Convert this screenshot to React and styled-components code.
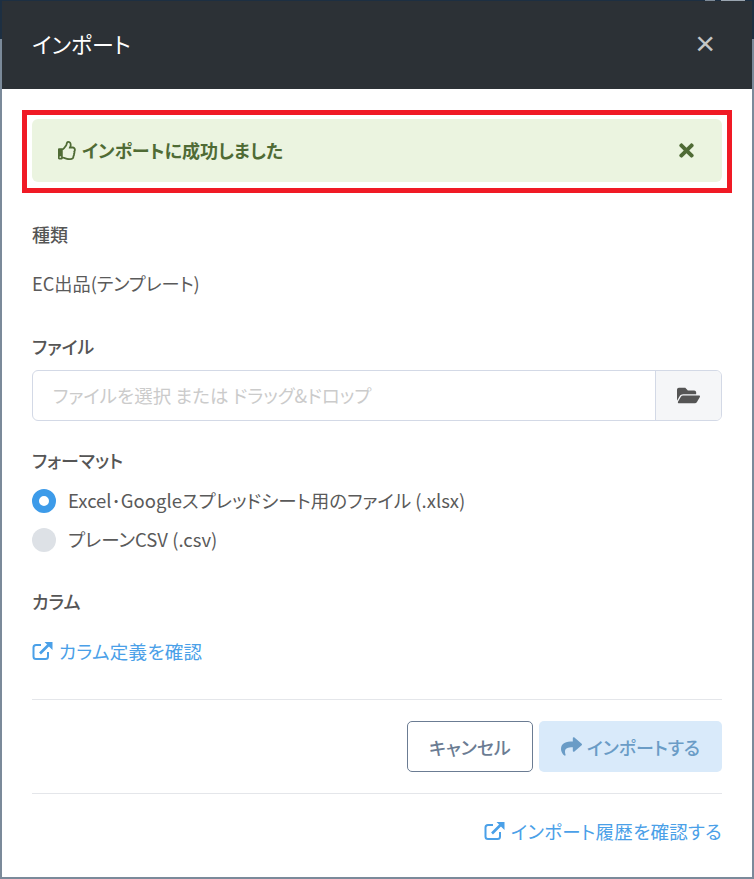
import React from 'react'
import styled, { createGlobalStyle } from 'styled-components'
import { FaRegThumbsUp, FaTimes, FaFolderOpen, FaShare } from 'react-icons/fa'

const GlobalStyle = createGlobalStyle`
  html, body { margin: 0; padding: 0; }
  body {
    font-family: "Noto Sans CJK JP", "Noto Sans", sans-serif;
    font-feature-settings: "palt";
  }
`

const LinkIcon = () => (
  <svg width="21" height="20" viewBox="0 0 21 20" fill="none">
    <path d="M9 4H4a2.500 2.500 0 0 0-2.500 2.500v9A2.500 2.500 0 0 0 4 18h9.500a2.500 2.500 0 0 0 2.500-2.500V11" stroke="currentColor" strokeWidth="2" />
    <path d="M8 12.500L16.500 4" stroke="currentColor" strokeWidth="2.600" />
    <path d="M12.500 1h8v8l-2.800-2.800-2.400-2.400z" fill="currentColor" />
  </svg>
)

const App = () => (
  <>
    <GlobalStyle />
    <Backdrop>
      <TopEdge />
      <Modal>
        <Header>
          <Title>インポート</Title>
          <CloseButton aria-label="閉じる">×</CloseButton>
        </Header>
        <Body>
          <Alert>
            <AlertText><FaRegThumbsUp size={19} />インポートに成功しました</AlertText>
            <AlertClose><FaTimes size={21} /></AlertClose>
          </Alert>
          <Highlight />

          <Label $top={41}>種類</Label>
          <Value>EC出品(テンプレート)</Value>

          <Label $top={39}>ファイル</Label>
          <FileInput>
            <Placeholder>ファイルを選択 または ドラッグ&ドロップ</Placeholder>
            <FileButton><FaFolderOpen size={23} /></FileButton>
          </FileInput>

          <Label $top={28}>フォーマット</Label>
          <RadioList>
            <RadioRow><Radio $checked /><span>Excel･Googleスプレッドシート用のファイル (.xlsx)</span></RadioRow>
            <RadioRow><Radio /><span>プレーンCSV (.csv)</span></RadioRow>
          </RadioList>

          <Label $top={36}>カラム</Label>
          <ColumnLink><LinkIcon /><span>カラム定義を確認</span></ColumnLink>

          <Divider $top={36} />
          <Actions>
            <CancelButton>キャンセル</CancelButton>
            <ImportButton><FaShare size={21} />インポートする</ImportButton>
          </Actions>
          <Divider $top={21} />
          <Footer>
            <ColumnLink as="span" $flat><LinkIcon /><span>インポート履歴を確認する</span></ColumnLink>
          </Footer>
        </Body>
      </Modal>
    </Backdrop>
  </>
)

export default App

const Backdrop = styled.div`
  position: relative;
  box-sizing: border-box;
  width: 754px;
  height: 879px;
  padding: 1px 2px 2px;
  overflow: hidden;
  background: linear-gradient(#1d2f42 0, #1d2f42 39px, #7b8a9a 39px, #7b8a9a 100%);
`
const TopEdge = styled.div`
  position: absolute;
  top: 0;
  right: 9px;
  width: 40px;
  height: 1px;
  background: linear-gradient(90deg, #7d8b99 0 25%, transparent 25% 40%, #9aa5b0 40% 100%);
`
const Modal = styled.div`
  height: 100%;
  background: #fff;
  display: flex;
  flex-direction: column;
`
const Header = styled.div`
  box-sizing: border-box;
  height: 88px;
  flex: none;
  background: #2c3136;
  display: flex;
  align-items: center;
  justify-content: space-between;
  padding: 0 37px 0 30px;
`
const Title = styled.h1`
  margin: 0 0 4px;
  font-size: 22px;
  font-weight: 400;
  color: #fff;
`
const CloseButton = styled.button`
  border: none;
  background: none;
  padding: 0 0 4px;
  font-family: "Liberation Sans", sans-serif;
  font-size: 34px;
  line-height: 30px;
  font-weight: 400;
  color: #c4c6c7;
`
const Body = styled.div`
  position: relative;
  flex: 1;
  padding: 30px 30px 0;
  color: #5a5a5a;
`
const Alert = styled.div`
  box-sizing: border-box;
  height: 63px;
  background: #ebf4e0;
  border-radius: 6px;
  display: flex;
  align-items: center;
  justify-content: space-between;
  padding: 0 25px 0 26px;
  color: #4f6b35;
`
const AlertText = styled.span`
  display: flex;
  align-items: center;
  gap: 5px;
  font-size: 18px;
  line-height: 24px;
  padding-bottom: 1px;
  font-weight: 700;
`
const AlertClose = styled.span`
  display: flex;
`
const Highlight = styled.div`
  position: absolute;
  left: 20px;
  top: 21px;
  width: 700px;
  height: 73px;
  border: 5px solid #f01a25;
  pointer-events: none;
`
const Label = styled.div`
  margin-top: ${(p) => p.$top}px;
  height: 24px;
  line-height: 22px;
  font-size: 18px;
  font-weight: 500;
  color: #555;
`
const Value = styled.div`
  margin-top: 25px;
  height: 24px;
  line-height: 22px;
  font-size: 18.2px;
`
const FileInput = styled.div`
  box-sizing: border-box;
  margin-top: 11px;
  height: 51px;
  display: flex;
  border: 1px solid #d3d9e6;
  border-radius: 6px;
  overflow: hidden;
`
const Placeholder = styled.div`
  flex: 1;
  display: flex;
  align-items: center;
  padding: 0 0 2px 20px;
  font-size: 18.5px;
  color: #cbcbcb;
`
const FileButton = styled.div`
  width: 65px;
  display: flex;
  align-items: center;
  justify-content: center;
  background: #f5f6f8;
  border-left: 1px solid #d3d9e6;
  color: #555;
`
const RadioList = styled.div`
  margin-top: 14px;
  display: flex;
  flex-direction: column;
  gap: 11px;
`
const RadioRow = styled.div`
  height: 28px;
  display: flex;
  align-items: center;
  gap: 12px;
  font-size: 18.5px;
  color: #5a5a5a;
  span:last-child {
    padding-bottom: 2px;
  }
`
const Radio = styled.span`
  box-sizing: border-box;
  width: 24px;
  height: 24px;
  border-radius: 50%;
  background: ${(p) => (p.$checked ? '#fff' : '#dde1e6')};
  border: ${(p) => (p.$checked ? '7px solid #3d9be9' : 'none')};
`
const ColumnLink = styled.a`
  margin-top: ${(p) => (p.$flat ? 0 : 25)}px;
  height: 24px;
  display: flex;
  align-items: center;
  gap: 6px;
  font-size: 18.5px;
  letter-spacing: 0.3px;
  color: #4aa0e8;
  span {
    padding-bottom: 1px;
  }
`
const Divider = styled.hr`
  margin: ${(p) => p.$top}px 0 0;
  height: 1px;
  border: none;
  background: #e4e6ea;
`
const Actions = styled.div`
  margin-top: 21px;
  display: flex;
  justify-content: flex-end;
  gap: 6px;
`
const CancelButton = styled.button`
  box-sizing: border-box;
  width: 126px;
  height: 51px;
  border: 1px solid #6b7c93;
  border-radius: 5px;
  background: #fff;
  font: inherit;
  font-size: 18px;
  font-weight: 500;
  color: #6b7c93;
`
const ImportButton = styled.button`
  box-sizing: border-box;
  width: 183px;
  height: 51px;
  border: none;
  border-radius: 5px;
  background: #d9eafa;
  font: inherit;
  font-size: 18px;
  font-weight: 500;
  color: #6a9cc6;
  display: flex;
  align-items: center;
  justify-content: center;
  gap: 5px;
`
const Footer = styled.div`
  margin-top: 25px;
  display: flex;
  justify-content: flex-end;
`
